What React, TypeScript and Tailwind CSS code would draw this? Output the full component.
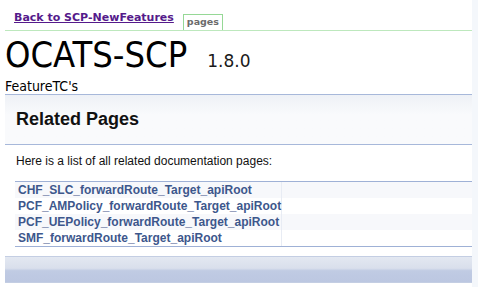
import React from 'react';

const pages = [
  'CHF_SLC_forwardRoute_Target_apiRoot',
  'PCF_AMPolicy_forwardRoute_Target_apiRoot',
  'PCF_UEPolicy_forwardRoute_Target_apiRoot',
  'SMF_forwardRoute_Target_apiRoot',
];

const tahoma = { fontFamily: '"DejaVu Sans Condensed", "DejaVu Sans", sans-serif' };

export default function App() {
  return (
    <div className="flex min-h-[287px] bg-white text-black">
      <div className="w-[472px] pl-[5px]">
        {/* top nav */}
        <div className="flex h-[31px] items-start border-b border-[#bde8bd] pl-[9px]">
          <a
            href="#"
            className="mt-[11px] text-[11px] font-bold leading-[14px] text-[#551a8b] underline"
            style={{ fontFamily: '"DejaVu Sans", Verdana, sans-serif' }}
          >
            Back to SCP-NewFeatures
          </a>
          <div
            className="ml-[9px] mt-[14px] flex h-[16px] items-center border border-b-0 border-[#96d896] px-[3px] text-[9.5px] font-bold text-[#6b6b6b]"
            style={{ fontFamily: '"DejaVu Sans", Verdana, sans-serif' }}
          >
            pages
          </div>
        </div>

        {/* project title */}
        <div className="h-[63px] pt-[4px]" style={tahoma}>
          <div className="flex h-[40px] items-baseline whitespace-nowrap">
            <span className="text-[36px] leading-[40px]">OCATS-SCP</span>
            <span
              className="ml-[20px] text-[17px] leading-[20px] text-[#1a1a1a]"
              style={{ fontFamily: '"DejaVu Sans", sans-serif' }}
            >
              1.8.0
            </span>
          </div>
          <div className="mt-[3px] text-[14px] leading-[16px]">FeatureTC's</div>
        </div>

        {/* header */}
        <div
          className="h-[51px] border-y border-[#a7b8da] bg-gradient-to-b from-[#eef1f6] to-[#f9fafc] to-40% pl-[11px] pt-[14px]"
          style={{ fontFamily: '"Liberation Sans", Arial, sans-serif' }}
        >
          <div className="text-[18px] font-bold leading-[20px] text-[#111]">Related Pages</div>
        </div>

        <div style={{ fontFamily: '"Liberation Sans", Arial, sans-serif' }}>
          <div className="ml-[11px] mt-[9px] text-[12px] leading-[15px] text-[#111]">
            Here is a list of all related documentation pages:
          </div>

          <div className="ml-[10px] mt-[12px] border-y border-[#9fb1d6]">
            {pages.map((p, i) => (
              <div key={p} className={`flex h-[16px] ${i % 2 === 0 ? 'bg-[#f7f8fb]' : 'bg-white'}`}>
                <div className="w-[267px] border-r border-[#e8ecf4] pl-[3px] text-[12px] font-bold leading-[16px] text-[#3d578c]">
                  <a href="#">{p}</a>
                </div>
                <div className="flex-1" />
              </div>
            ))}
          </div>

          {/* nav path footer */}
          <div className="mt-[9px] h-[27px] border-y border-[#c4cee3] bg-[linear-gradient(to_bottom,#e3e8f1_0%,#d9dfec_45%,#c0cbe3_55%,#bcc7e1_100%)]" />
        </div>
      </div>
      <div className="w-[6px] bg-[#f4f7fb]" />
    </div>
  );
}
